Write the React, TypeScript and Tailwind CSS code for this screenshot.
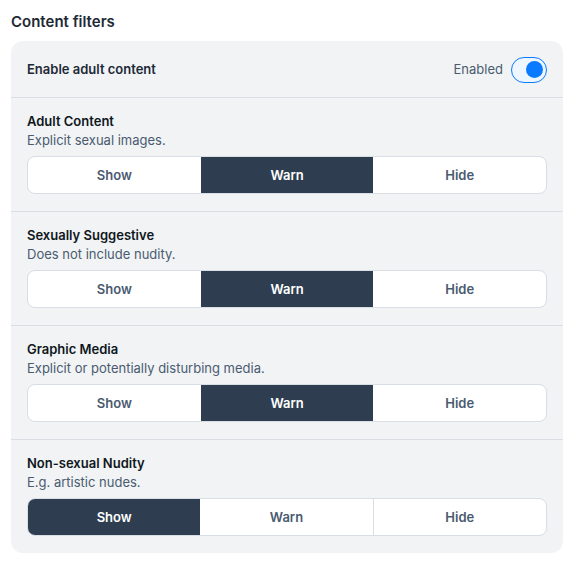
import React, { useState } from "react";

type Choice = "Show" | "Warn" | "Hide";

const sections: { title: string; desc: string; value: Choice }[] = [
  { title: "Adult Content", desc: "Explicit sexual images.", value: "Warn" },
  { title: "Sexually Suggestive", desc: "Does not include nudity.", value: "Warn" },
  { title: "Graphic Media", desc: "Explicit or potentially disturbing media.", value: "Warn" },
  { title: "Non-sexual Nudity", desc: "E.g. artistic nudes.", value: "Show" },
];

function Segmented({ value }: { value: Choice }) {
  const opts: Choice[] = ["Show", "Warn", "Hide"];
  return (
    <div className="flex h-[38px] rounded-lg border border-[#d9dee5] bg-white overflow-hidden">
      {opts.map((o, i) => {
        const sel = o === value;
        const prevSel = i > 0 && opts[i - 1] === value;
        return (
          <div
            key={o}
            className={
              "flex-1 flex items-center justify-center pt-[2px] text-[13px] font-semibold " +
              (sel ? "bg-[#2e3e50] text-white " : "text-[#4a5b70] ") +
              (i > 0 && !sel && !prevSel ? "border-l border-[#d9dee5]" : "")
            }
          >
            {o}
          </div>
        );
      })}
    </div>
  );
}

export default function App() {
  const [on, setOn] = useState(true);
  return (
    <div className="w-[583px] min-h-[566px] bg-white pl-[11px] pr-[20px] pt-[12px] font-['Inter',sans-serif]">
      <div className="text-[15px] font-semibold text-[#1e2936] leading-[20px] mb-[9px]">Content filters</div>
      <div className="w-[552px] rounded-xl bg-[#f1f3f5]">
        <div className="flex items-center justify-between h-[56px] px-4 pt-[1px]">
          <div className="text-[13px] font-semibold text-[#1e2936]">Enable adult content</div>
          <div className="flex items-center gap-2">
            <span className="text-[13px] text-[#4a5b70]">Enabled</span>
            <button
              onClick={() => setOn(!on)}
              className="w-[36px] h-[26px] rounded-full border-[1.5px] border-[#0a7aff] bg-[#eef6ff] flex items-center px-[3px] justify-end"
            >
              <span className="w-[17px] h-[17px] rounded-full bg-[#0a7aff] block" />
            </button>
          </div>
        </div>
        {sections.map((s) => (
          <div key={s.title} className="border-t border-[#d9dee5] px-4 pt-[13px] pb-[17px]">
            <div className="text-[13px] font-semibold text-[#0f1720] leading-[20px]">{s.title}</div>
            <div className="text-[13px] text-[#4a5b70] leading-[18px] mb-[7px]">{s.desc}</div>
            <Segmented value={s.value} />
          </div>
        ))}
      </div>
    </div>
  );
}
